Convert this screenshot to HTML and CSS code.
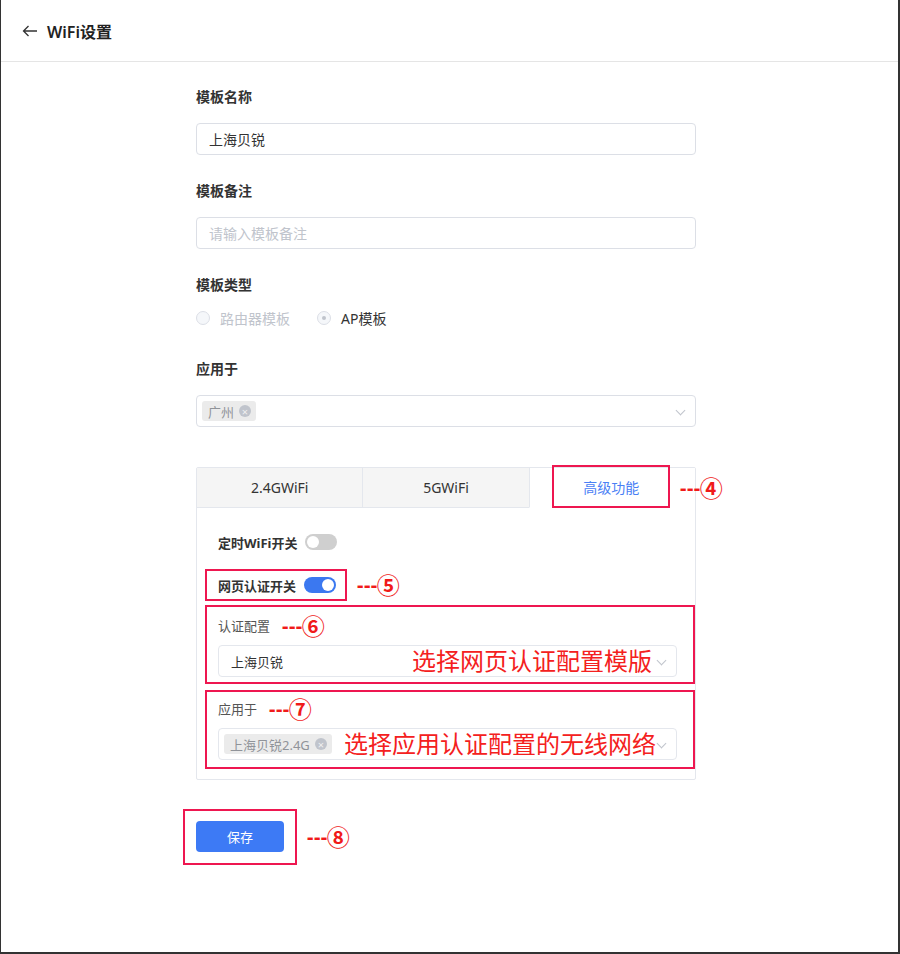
FILE: index.html
```html
<!DOCTYPE html>
<html lang="zh-CN">
<head>
    <meta charset="UTF-8">
    <meta name="viewport" content="width=device-width, initial-scale=1.0">
    <title>WiFi设置</title>
    <link rel="stylesheet" href="styles.css">
</head>
<body>
    <div class="page">
        <header class="topbar">
            <svg class="back" width="16" height="12" viewBox="0 0 16 12">
                <path d="M15 6H1.5M6.5 1L1.5 6l5 5" fill="none" stroke="#333" stroke-width="1.3"/>
            </svg>
            <h1>WiFi设置</h1>
        </header>

        <div class="form">
            <div class="field">
                <div class="field-label">模板名称</div>
                <div class="input">上海贝锐</div>
            </div>

            <div class="field">
                <div class="field-label">模板备注</div>
                <div class="input placeholder">请输入模板备注</div>
            </div>

            <div class="field field-radio">
                <div class="field-label tight">模板类型</div>
                <div class="radio-group">
                    <span class="radio"><span class="dot"></span><span class="radio-text muted">路由器模板</span></span>
                    <span class="radio checked"><span class="dot"></span><span class="radio-text">AP模板</span></span>
                </div>
            </div>

            <div class="field field-last">
                <div class="field-label">应用于</div>
                <div class="input select">
                    <span class="tag">广州<span class="tag-close">×</span></span>
                    <span class="chevron"></span>
                </div>
            </div>

            <div class="tabs">
                <div class="tab-head">
                    <div class="tab">2.4GWiFi</div>
                    <div class="tab">5GWiFi</div>
                    <div class="tab active"><span class="mark tab-mark">高级功能</span></div>
                </div>
                <span class="note note-4"><span class="dash">---</span><span class="num">④</span></span>

                <div class="tab-body">
                    <div class="switch-row plain">
                        <span class="switch-label">定时WiFi开关</span>
                        <span class="switch"></span>
                    </div>

                    <div class="switch-line">
                        <div class="switch-row mark">
                            <span class="switch-label">网页认证开关</span>
                            <span class="switch on"></span>
                        </div>
                        <span class="note"><span class="dash">---</span><span class="num">⑤</span></span>
                    </div>

                    <div class="mark block block-auth">
                        <div class="sub-label">认证配置 <span class="note"><span class="dash">---</span><span class="num">⑥</span></span></div>
                        <div class="input select small">
                            <span>上海贝锐</span>
                            <span class="hint">选择网页认证配置模版</span>
                            <span class="chevron"></span>
                        </div>
                    </div>

                    <div class="mark block block-apply">
                        <div class="sub-label">应用于 <span class="note"><span class="dash">---</span><span class="num">⑦</span></span></div>
                        <div class="input select small">
                            <span class="tag">上海贝锐2.4G<span class="tag-close">×</span></span>
                            <span class="hint">选择应用认证配置的无线网络</span>
                            <span class="chevron"></span>
                        </div>
                    </div>
                </div>
            </div>

            <div class="save-line">
                <div class="mark save-mark">
                    <button class="btn">保存</button>
                </div>
                <span class="note"><span class="dash">---</span><span class="num">⑧</span></span>
            </div>
        </div>
    </div>
</body>
</html>
```

FILE: styles.css
```css
body {
    margin: 0;
    font-family: "Noto Sans", "Noto Sans CJK SC", sans-serif;
    font-size: 14px;
    color: #333;
    background: #fff;
}

.page {
    height: 954px;
    box-sizing: border-box;
    border-left: 1px solid #333;
    border-right: 2px solid #333;
    border-bottom: 2px solid #333;
}

.topbar {
    height: 61px;
    border-bottom: 1px solid #e5e5e5;
    display: flex;
    align-items: center;
    padding-left: 21px;
}

.topbar .back {
    margin-right: 9px;
}

.topbar h1 {
    margin: 0;
    font-size: 16px;
    font-weight: 600;
    color: #222;
}

.form {
    margin-left: 195px;
    width: 500px;
    padding-top: 25px;
}

.field {
    margin-bottom: 26px;
}

.field-radio {
    margin-bottom: 31px;
}

.field-last {
    margin-bottom: 40px;
}

.field-label {
    line-height: 20px;
    font-weight: 700;
    color: #333;
    margin-bottom: 16px;
}

.field-label.tight {
    margin-bottom: 13px;
}

.input {
    height: 32px;
    box-sizing: border-box;
    border: 1px solid #dcdfe6;
    border-radius: 4px;
    padding: 0 12px;
    display: flex;
    align-items: center;
    color: #333;
    position: relative;
}

.input.placeholder {
    color: #c0c4cc;
}

.select {
    padding-left: 5px;
}

.chevron {
    position: absolute;
    right: 11px;
    top: 11px;
    width: 6px;
    height: 6px;
    border-right: 1px solid #c0c4cc;
    border-bottom: 1px solid #c0c4cc;
    transform: rotate(45deg);
}

.tag {
    display: inline-flex;
    align-items: center;
    height: 20px;
    padding: 0 5px 0 6px;
    background: #ebebeb;
    border-radius: 3px;
    color: #909399;
    font-size: 13px;
}

.tag-close {
    display: inline-flex;
    align-items: center;
    justify-content: center;
    width: 12px;
    height: 12px;
    margin-left: 5px;
    border-radius: 50%;
    background: #c0c4cc;
    color: #f0f0f0;
    font-size: 11px;
    line-height: 1;
}

.radio-group {
    display: flex;
    height: 20px;
    align-items: center;
}

.radio {
    display: inline-flex;
    align-items: center;
    margin-right: 27px;
}

.radio .dot {
    width: 12px;
    height: 12px;
    border: 1px solid #dcdfe6;
    background: #f5f7fa;
    border-radius: 50%;
    margin-right: 10px;
    position: relative;
}

.radio.checked .dot::after {
    content: "";
    position: absolute;
    left: 4px;
    top: 4px;
    width: 4px;
    height: 4px;
    border-radius: 50%;
    background: #c0c4cc;
}

.radio-text.muted {
    color: #c0c4cc;
}

.tabs {
    border: 1px solid #e4e7ed;
    border-radius: 2px;
    position: relative;
    font-size: 13px;
}

.tab-head {
    display: flex;
    height: 40px;
    background: #f5f5f5;
}

.tab {
    flex: 1;
    display: flex;
    align-items: center;
    justify-content: center;
    border-bottom: 1px solid #e4e7ed;
    border-left: 1px solid #e4e7ed;
    color: #333;
    font-size: 14px;
}

.tab:first-child {
    border-left: none;
}

.tab.active {
    background: #fff;
    border-bottom-color: transparent;
    color: #4a80f5;
    align-items: flex-start;
}

.mark {
    border: 2px solid #ee1750;
    box-sizing: border-box;
}

.tab-mark {
    width: 118px;
    height: 43px;
    margin-top: -3px;
    margin-left: -2px;
    display: flex;
    align-items: center;
    justify-content: center;
}

.note {
    color: #f01a1a;
    white-space: nowrap;
    display: inline-flex;
    align-items: center;
    line-height: 20px;
}

.note .dash {
    font-size: 20px;
    letter-spacing: 0.5px;
    font-weight: 700;
}

.note .num {
    font-size: 23px;
    font-weight: 700;
    margin-left: -1px;
}

.note-4 {
    position: absolute;
    left: 483px;
    top: 10px;
}

.tab-body {
    padding: 24px 0 10px 8px;
}

.switch-row {
    display: flex;
    align-items: center;
    height: 20px;
    padding-left: 13px;
}

.switch-row.mark {
    height: 32px;
    padding: 0 9px 0 11px;
}

.switch-label {
    font-weight: 700;
    margin-right: 8px;
}

.switch {
    width: 32px;
    height: 16px;
    border-radius: 8px;
    background: #cfcfcf;
    position: relative;
}

.switch::after {
    content: "";
    position: absolute;
    left: 2px;
    top: 2px;
    width: 12px;
    height: 12px;
    border-radius: 50%;
    background: #fff;
}

.switch.on {
    background: #3b78f0;
}

.switch.on::after {
    left: 18px;
}

.switch-line {
    display: flex;
    align-items: center;
    margin-top: 17px;
    margin-bottom: 4px;
}

.switch-line .note {
    margin-left: 10px;
}

.block {
    padding: 9px 16px 5px 11px;
}

.block-apply {
    margin-top: 6px;
    padding-top: 7px;
    padding-bottom: 7px;
}

.sub-label {
    line-height: 20px;
    color: #555;
    margin-bottom: 9px;
    display: flex;
    align-items: center;
}

.sub-label .note {
    margin-left: 12px;
}

.input.small {
    padding-left: 12px;
    border-color: #e4e7ed;
    font-size: 13px;
}

.block-apply .input.small {
    padding-left: 5px;
}

.hint {
    position: absolute;
    right: 24px;
    top: 1px;
    font-size: 24px;
    line-height: 28px;
    color: #f42020;
    white-space: nowrap;
}

.block-apply .hint {
    right: 20px;
}

.save-line {
    display: flex;
    align-items: center;
    margin-top: 29px;
    margin-left: -13px;
}

.save-mark {
    padding: 10px 11px 11px 11px;
}

.btn {
    width: 88px;
    height: 31px;
    border: none;
    border-radius: 4px;
    background: #3d7af5;
    color: #fff;
    font-family: inherit;
    font-size: 13px;
}

.save-line .note {
    margin-left: 10px;
}
```
